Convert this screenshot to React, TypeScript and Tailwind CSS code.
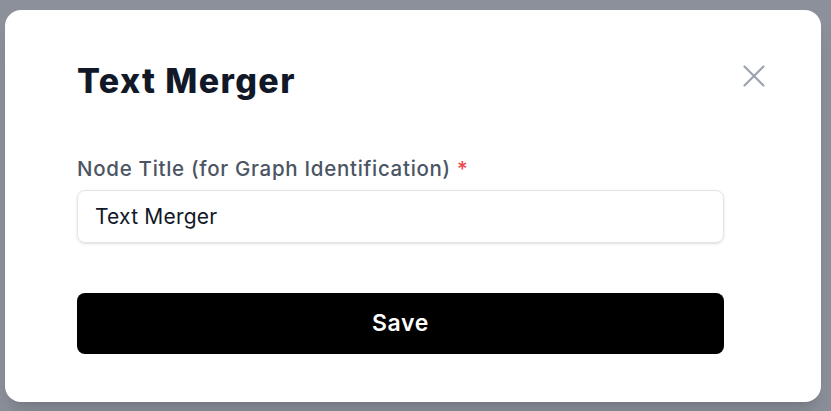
import React from 'react';

export default function App() {
  return (
    <div
      className="w-[831px] h-[411px] bg-[#8b909b] pl-[5px] pt-[10px] overflow-hidden"
      style={{ fontFamily: 'Inter, "Noto Sans", sans-serif' }}
    >
      <div className="relative w-[816px] h-[392px] bg-white rounded-2xl pl-[72px] pt-[51px] shadow-xl">
        <h2 className="text-[34px] leading-[40px] font-extrabold text-[#111827] tracking-[1.4px]">
          Text Merger
        </h2>
        <button className="absolute top-[55px] right-[56px] text-[#9ca3af]">
          <svg width="22" height="22" viewBox="0 0 22 22" fill="none" stroke="currentColor" strokeWidth="2.2" strokeLinecap="round">
            <path d="M1.5 1.5l19 19M20.5 1.5l-19 19" />
          </svg>
        </button>
        <div className="w-[647px] mt-[55px]">
          <label className="block text-[20.5px] leading-[26px] font-medium text-[#4b5563] tracking-[0.7px]">
            Node Title (for Graph Identification) <span className="text-[#ef4444]">*</span>
          </label>
          <input
            className="mt-[8px] w-full h-[53px] rounded-lg border border-[#e2e4e8] shadow-sm px-[17px] text-[21px] text-[#111827] tracking-[0.2px] outline-none"
            defaultValue="Text Merger"
          />
          <button className="mt-[50px] w-full h-[61px] rounded-lg bg-black text-white text-[23px] font-semibold tracking-[0.6px]">
            Save
          </button>
        </div>
      </div>
    </div>
  );
}
